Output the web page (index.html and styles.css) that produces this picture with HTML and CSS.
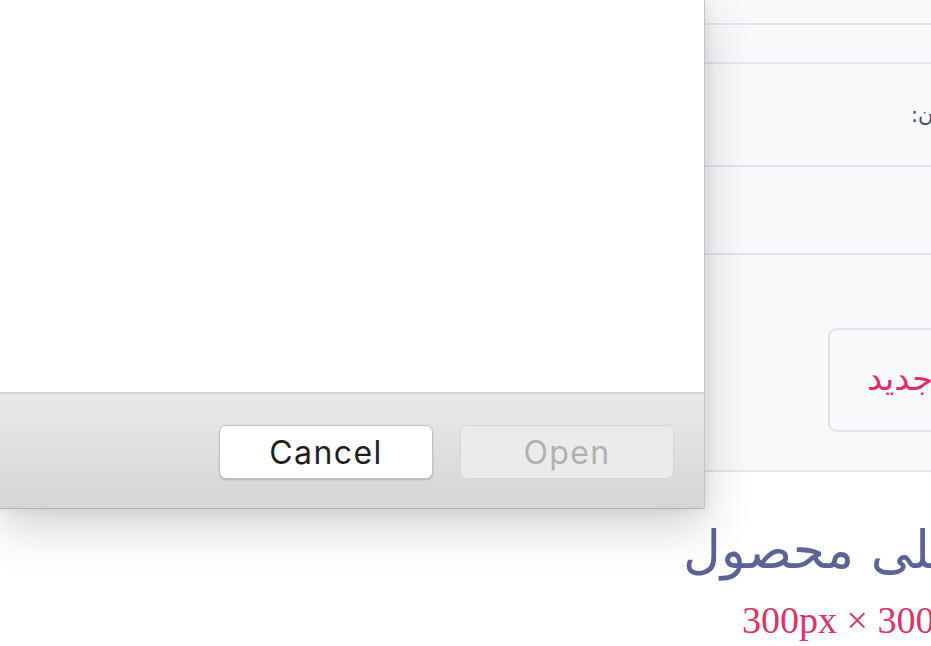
FILE: index.html
```html
<!DOCTYPE html>
<html lang="fa">
<head>
<meta charset="utf-8">
<title>Upload</title>
<link rel="stylesheet" href="styles.css">
</head>
<body>
<div class="page">
  <div class="panel">
    <div class="row r1"></div>
    <div class="row r2"></div>
    <div class="row r3"><span class="label rtl">عنوان:</span></div>
    <div class="row r4"></div>
    <div class="row r5"><div class="btn-renew"><span class="rtl">انتخاب تصویر جدید</span></div></div>
  </div>
  <div class="section">
    <h2 class="heading rtl">تصویر اصلی محصول</h2>
    <p class="size">300px × 300px</p>
  </div>
</div>

<div class="dialog">
  <div class="dialog-body"></div>
  <div class="dialog-footer">
    <button class="mac-btn cancel">Cancel</button>
    <button class="mac-btn open" disabled>Open</button>
  </div>
</div>
</body>
</html>
```
FILE: styles.css
```css
html, body {
  margin: 0;
  padding: 0;
  height: 100%;
}
body {
  background: #ffffff;
  overflow: hidden;
  font-family: "DejaVu Sans", "Noto Sans", sans-serif;
  position: relative;
}
.page {
  width: 931px;
  overflow: hidden;
}
.rtl {
  direction: rtl;
  unicode-bidi: isolate;
  display: inline-block;
  white-space: nowrap;
}
.panel {
  background: #f8f9fb;
}
.row {
  border-bottom: 2px solid #e3e5ec;
  box-sizing: border-box;
  white-space: nowrap;
  overflow: hidden;
}
.r1 { height: 25px; }
.r2 { height: 39px; }
.r3 {
  height: 103px;
  display: flex;
  align-items: center;
  padding-left: 911px;
}
.label {
  font-size: 21px;
  color: #4d5163;
}
.r4 { height: 88px; }
.r5 {
  height: 217px;
  padding-left: 828px;
  padding-top: 73px;
}
.btn-renew {
  width: 300px;
  height: 104px;
  box-sizing: border-box;
  border: 2px solid #e1e3ea;
  border-radius: 9px;
  background: #f9fafc;
  padding-left: 37px;
  padding-bottom: 4px;
  display: flex;
  align-items: center;
  font-size: 34px;
  color: #df2f6a;
}
.section {
  padding-top: 43px;
  padding-left: 683px;
  white-space: nowrap;
}
.heading {
  margin: 0;
  font-weight: normal;
  font-size: 52px;
  line-height: 70px;
  color: #5c6397;
}
.size {
  margin: 13px 0 0 59px;
  font-family: "Liberation Serif", "Times New Roman", serif;
  font-size: 38px;
  line-height: 44px;
  color: #d8356b;
}

.dialog {
  position: absolute;
  left: 0;
  top: 0;
  width: 705px;
  height: 509px;
  display: flex;
  flex-direction: column;
  border-right: 1px solid #c4c4c4;
  border-bottom: 1px solid #b3b3b3;
  box-sizing: border-box;
  box-shadow: 0 18px 45px rgba(0, 0, 0, 0.18), 0 0 14px rgba(0, 0, 0, 0.08);
}
.dialog-body {
  flex: 1;
  background: #ffffff;
  border-bottom: 2px solid #d3d3d3;
}
.dialog-footer {
  height: 114px;
  box-sizing: border-box;
  background: linear-gradient(#e9e9e9, #d5d5d5);
  display: flex;
  justify-content: flex-end;
  align-items: flex-start;
  gap: 27px;
  padding: 31px 30px 0 0;
}
.mac-btn {
  width: 214px;
  height: 54px;
  box-sizing: border-box;
  border-radius: 7px;
  font-family: "Inter", "Liberation Sans", sans-serif;
  font-size: 32px;
  letter-spacing: 1.4px;
  padding: 0;
  margin: 0;
}
.cancel {
  background: #ffffff;
  color: #1f1f1f;
  border: 1px solid #c2c2c2;
  box-shadow: 0 1px 2px rgba(0, 0, 0, 0.18);
}
.open {
  background: #ebebeb;
  color: #b1b1b1;
  border: 1px solid #d6d6d6;
}
```
